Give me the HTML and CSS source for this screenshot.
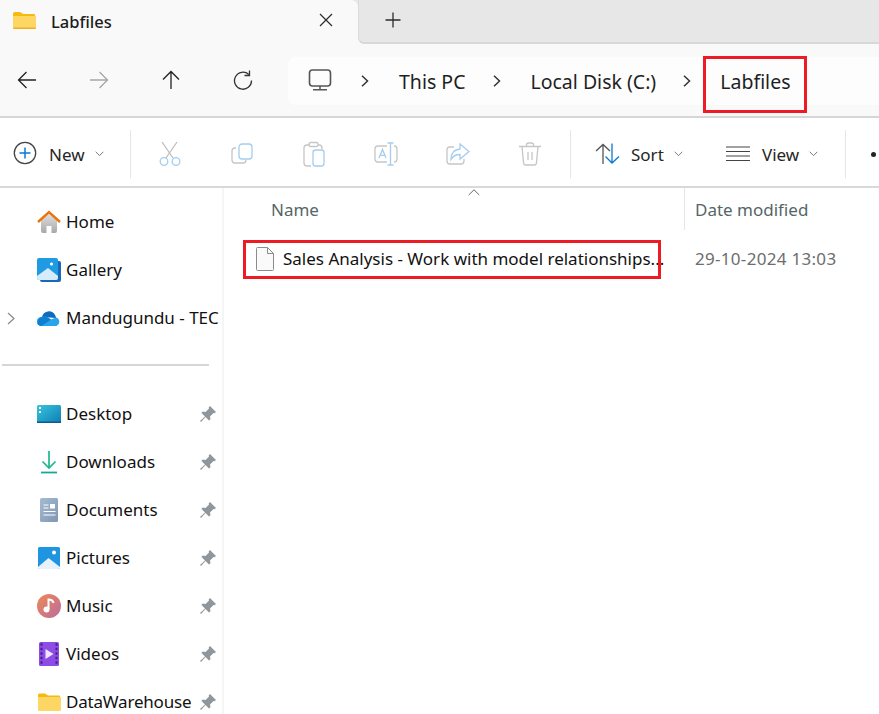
FILE: index.html
```html
<!DOCTYPE html>
<html lang="en">
<head>
<meta charset="utf-8">
<title>Labfiles</title>
<link rel="stylesheet" href="styles.css">
</head>
<body>
<div class="app">
  <header class="tabstrip">
    <div class="tab">
      <svg class="tab-folder" width="24" height="18" viewBox="0 0 24 18"><path d="M1 3a2 2 0 0 1 2-2h5l3 2h11a1 1 0 0 1 1 1v1H1z" fill="#f5b90f"/><path d="M1 5h23v11a1.500 1.500 0 0 1-1.500 1.500h-20A1.500 1.500 0 0 1 1 16z" fill="#fdd663"/><path d="M1 16.500h23v.5a1 1 0 0 1-1 1H2a1 1 0 0 1-1-1z" fill="#eeb01f"/></svg>
      <span class="tab-title">Labfiles</span>
      <svg class="tab-close" width="14" height="14" viewBox="0 0 14 14"><path d="M1 1l12 12M13 1L1 13" stroke="#2b2b2b" stroke-width="1.200" fill="none"/></svg>
    </div>
    <div class="tab-rest">
      <svg class="tab-plus" width="16" height="16" viewBox="0 0 16 16"><path d="M8 .5v15M.5 8h15" stroke="#2b2b2b" stroke-width="1.300" fill="none"/></svg>
    </div>
  </header>

  <nav class="navbar">
    <div class="nav-btn"><svg width="20" height="20" viewBox="0 0 20 20"><path d="M19 10H1.500M9.500 2l-8 8 8 8" stroke="#222" stroke-width="1.300" fill="none"/></svg></div>
    <div class="nav-btn"><svg width="20" height="20" viewBox="0 0 20 20"><path d="M1 10h17.500M10.500 2l8 8-8 8" stroke="#a6a6a6" stroke-width="1.300" fill="none"/></svg></div>
    <div class="nav-btn"><svg width="20" height="20" viewBox="0 0 20 20"><path d="M10 19V1.500M2 9.500l8-8 8 8" stroke="#222" stroke-width="1.300" fill="none"/></svg></div>
    <div class="nav-btn"><svg width="20" height="20" viewBox="0 0 20 20"><path d="M15.800 4.500A8.500 8.500 0 1 0 18.500 10.500" stroke="#333" stroke-width="1.300" fill="none"/><path d="M16.500 .5v5h-5" stroke="#333" stroke-width="1.300" fill="none"/></svg></div>
    <div class="address">
      <svg class="pc-icon" width="24" height="22" viewBox="0 0 24 22"><rect x="1.500" y="1" width="21" height="16" rx="3" fill="none" stroke="#555" stroke-width="1.600"/><path d="M12 17v4M5 20.800h14" stroke="#555" stroke-width="1.500" fill="none"/></svg>
      <svg class="crumb-chev chev-pc" width="8" height="12" viewBox="0 0 8 12"><path d="M1 .8L6.500 6 1 11.200" stroke="#333" stroke-width="1.500" fill="none"/></svg>
      <span class="crumb crumb-pc">This PC</span>
      <svg class="crumb-chev chev-disk" width="8" height="12" viewBox="0 0 8 12"><path d="M1 .8L6.500 6 1 11.200" stroke="#333" stroke-width="1.500" fill="none"/></svg>
      <span class="crumb crumb-disk">Local Disk (C:)</span>
      <svg class="crumb-chev chev-lab" width="8" height="12" viewBox="0 0 8 12"><path d="M1 .8L6.500 6 1 11.200" stroke="#333" stroke-width="1.500" fill="none"/></svg>
      <span class="crumb crumb-current">Labfiles<i class="mark mark-crumb"></i></span>
    </div>
  </nav>

  <section class="toolbar">
    <div class="tool tool-new">
      <svg width="24" height="24" viewBox="0 0 24 24"><circle cx="12" cy="12" r="10.700" fill="none" stroke="#444" stroke-width="1.300"/><path d="M12 6.500v11M6.500 12h11" stroke="#0a78d4" stroke-width="1.500"/></svg>
      <span class="tool-label">New</span>
      <svg class="chev" width="9" height="6" viewBox="0 0 9 6"><path d="M.7 .8L4.500 4.600 8.300 .8" stroke="#777" stroke-width="1" fill="none"/></svg>
    </div>
    <div class="tool-sep"></div>
    <div class="tool-icon"><svg width="22" height="26" viewBox="0 0 22 26"><path d="M3 1l11 16M18 1L7 17" stroke="#bdbdbd" stroke-width="1.300" fill="none"/><circle cx="5" cy="20.500" r="3.800" fill="none" stroke="#a4cdf0" stroke-width="1.300"/><circle cx="17" cy="20.500" r="3.800" fill="none" stroke="#a4cdf0" stroke-width="1.300"/></svg></div>
    <div class="tool-icon"><svg width="22" height="22" viewBox="0 0 22 22"><path d="M5 5H4a3 3 0 0 0-3 3v9a3 3 0 0 0 3 3h8a3 3 0 0 0 3-3" fill="none" stroke="#c6c6c6" stroke-width="1.300"/><rect x="8" y="1" width="13" height="15" rx="3" fill="none" stroke="#a4cdf0" stroke-width="1.300"/></svg></div>
    <div class="tool-icon"><svg width="22" height="26" viewBox="0 0 22 26"><path d="M7 4H4a3 3 0 0 0-3 3v15a3 3 0 0 0 3 3h4M15 4h1a3 3 0 0 1 3 3v1" fill="none" stroke="#c6c6c6" stroke-width="1.300"/><rect x="6" y="1.500" width="9" height="4" rx="1.500" fill="none" stroke="#c6c6c6" stroke-width="1.300"/><rect x="10" y="9" width="11" height="16" rx="2.500" fill="none" stroke="#a4cdf0" stroke-width="1.300"/></svg></div>
    <div class="tool-icon"><svg width="24" height="24" viewBox="0 0 24 24"><path d="M13 4H4a3 3 0 0 0-3 3v10a3 3 0 0 0 3 3h9M20 4a3 3 0 0 1 3 3v10a3 3 0 0 1-3 3" fill="none" stroke="#c6c6c6" stroke-width="1.300"/><path d="M16.500 1v22M13.500 1h6M13.500 23h6" stroke="#a4cdf0" stroke-width="1.300" fill="none"/><path d="M5 16l3.500-8.500L12 16M6.200 13.300h4.600" stroke="#a4cdf0" stroke-width="1.300" fill="none"/></svg></div>
    <div class="tool-icon"><svg width="24" height="22" viewBox="0 0 24 22"><path d="M8 4H4a3 3 0 0 0-3 3v11a3 3 0 0 0 3 3h11a3 3 0 0 0 3-3v-2" fill="none" stroke="#c6c6c6" stroke-width="1.300"/><path d="M14 1l9 7.500-9 7.500v-4.500c-4 0-7 1.500-9 5 0-6 3-10 9-10.500z" fill="none" stroke="#a4cdf0" stroke-width="1.300"/></svg></div>
    <div class="tool-icon"><svg width="22" height="24" viewBox="0 0 22 24"><path d="M0 4.500h22M7.500 4.500V3a2 2 0 0 1 2-2h3a2 2 0 0 1 2 2v1.500M3 4.500l1.500 16a2.500 2.500 0 0 0 2.500 2.500h8a2.500 2.500 0 0 0 2.500-2.500l1.500-16M9 10v8M13 10v8" fill="none" stroke="#c6c6c6" stroke-width="1.300"/></svg></div>
    <div class="tool-sep tool-sep-b"></div>
    <div class="tool tool-sort">
      <svg class="tool-glyph" width="26" height="22" viewBox="0 0 26 22"><path d="M8 21V1.500M1 8l7-6.500L15 8" stroke="#555" stroke-width="1.300" fill="none"/><path d="M17 .5V20M10.500 13.500L17 20l7-6.500" stroke="#0a78d4" stroke-width="1.300" fill="none"/></svg>
      <span class="tool-label">Sort</span>
      <svg class="chev" width="9" height="6" viewBox="0 0 9 6"><path d="M.7 .8L4.500 4.600 8.300 .8" stroke="#777" stroke-width="1" fill="none"/></svg>
    </div>
    <div class="tool tool-view">
      <svg class="tool-glyph" width="24" height="16" viewBox="0 0 24 16"><path d="M0 1h24M0 5.500h24M0 10h24M0 14.500h24" stroke="#444" stroke-width="1.200"/></svg>
      <span class="tool-label">View</span>
      <svg class="chev" width="9" height="6" viewBox="0 0 9 6"><path d="M.7 .8L4.500 4.600 8.300 .8" stroke="#777" stroke-width="1" fill="none"/></svg>
    </div>
    <div class="tool-sep"></div>
    <div class="more-dot"></div>
  </section>

  <div class="body">
    <aside class="sidebar">
      <div class="side-row">
        <svg class="side-icon" width="24" height="24" viewBox="0 0 24 24"><defs><linearGradient id="hg" x1="0" y1="0" x2="0" y2="1"><stop offset="0" stop-color="#e2e2e2"/><stop offset="1" stop-color="#a8a8a8"/></linearGradient></defs><path d="M4 10l8-7 8 7v11a2 2 0 0 1-2 2h-3.500v-7h-5v7H6a2 2 0 0 1-2-2z" fill="url(#hg)"/><path d="M1 12L12 2l11 10" fill="none" stroke="#e8760b" stroke-width="2.400"/></svg>
        <span class="side-label">Home</span>
      </div>
      <div class="side-row">
        <svg class="side-icon" width="24" height="24" viewBox="0 0 24 24"><rect x="3" y="3" width="21" height="21" rx="2" fill="#1a69b8"/><path d="M0 2a2 2 0 0 1 2-2h17a2 2 0 0 1 2 2v18a2 2 0 0 1-2 2H2a2 2 0 0 1-2-2z" fill="#1f9be4"/><path d="M0 18l11-8 10 8v2a2 2 0 0 1-2 2H2a2 2 0 0 1-2-2z" fill="#d6ecfb"/><circle cx="14.500" cy="6" r="1.600" fill="#fff"/></svg>
        <span class="side-label">Gallery</span>
      </div>
      <div class="side-row">
        <svg class="side-chevron" width="8" height="13" viewBox="0 0 8 13"><path d="M1 1l6 5.500L1 12" stroke="#8c8c8c" stroke-width="1.300" fill="none"/></svg>
        <svg class="side-icon" width="24" height="16" viewBox="0 0 24 16"><path d="M5 7a7 7 0 0 1 13-2 5 5 0 0 1 1 3z" fill="#0f6cbd"/><path d="M4.500 16A4.500 4.500 0 0 1 4 7l5-.5 5 3 5-2a4.500 4.500 0 0 1 .5 8.500z" fill="#28a4ea"/><path d="M1 14.500C0 12 1.500 7.500 5 7l4-.5 5 3L4.500 16A4 4 0 0 1 1 14.500z" fill="#0f7fd1"/></svg>
        <span class="side-label">Mandugundu - TEC</span>
      </div>
      <div class="side-divider"></div>
      <div class="side-row">
        <svg class="side-icon" width="24" height="18" viewBox="0 0 24 18"><defs><linearGradient id="dg" x1="0" y1="0" x2="1" y2="1"><stop offset="0" stop-color="#36c6de"/><stop offset="1" stop-color="#0f7cb4"/></linearGradient></defs><rect width="24" height="18" rx="1.500" fill="url(#dg)"/><rect y="16.500" width="24" height="1.500" fill="#0b5c8c"/><rect x="2" y="2" width="2" height="2" fill="#fff"/><rect x="2" y="6" width="2" height="2" fill="#fff"/></svg>
        <span class="side-label">Desktop</span>
        <svg class="pin" width="16" height="16" viewBox="0 0 16 16"><path d="M10 0l6 6-1.500 1.200-1-.3L10 10.500l.5 2.700L9 14.500 5.500 11 1 16l-1-1 5-4.500L1.500 7l1.300-1.500 2.700.5L9 2.500l-.3-1z" fill="#8f979e"/></svg>
      </div>
      <div class="side-row">
        <svg class="side-icon" width="24" height="24" viewBox="0 0 24 24"><path d="M12 1v17M5.500 11.500L12 18l6.500-6.500" fill="none" stroke="#1fb88f" stroke-width="1.700"/><path d="M4 22.500h16" stroke="#18a6a0" stroke-width="1.800"/></svg>
        <span class="side-label">Downloads</span>
        <svg class="pin" width="16" height="16" viewBox="0 0 16 16"><path d="M10 0l6 6-1.500 1.200-1-.3L10 10.500l.5 2.700L9 14.500 5.500 11 1 16l-1-1 5-4.500L1.500 7l1.300-1.500 2.700.5L9 2.500l-.3-1z" fill="#8f979e"/></svg>
      </div>
      <div class="side-row">
        <svg class="side-icon" width="24" height="24" viewBox="0 0 24 24"><defs><linearGradient id="ng" x1="0" y1="0" x2="1" y2="1"><stop offset="0" stop-color="#a6bad2"/><stop offset="1" stop-color="#7f97b4"/></linearGradient></defs><rect x="3" width="18" height="24" rx="1.500" fill="url(#ng)"/><path d="M6.500 7h5M6.500 10h5M6.500 13.500h12M6.500 17h12" stroke="#fff" stroke-width="1.100"/><rect x="13" y="6" width="5" height="4.500" fill="#fff"/></svg>
        <span class="side-label">Documents</span>
        <svg class="pin" width="16" height="16" viewBox="0 0 16 16"><path d="M10 0l6 6-1.500 1.200-1-.3L10 10.500l.5 2.700L9 14.500 5.500 11 1 16l-1-1 5-4.500L1.500 7l1.300-1.500 2.700.5L9 2.500l-.3-1z" fill="#8f979e"/></svg>
      </div>
      <div class="side-row">
        <svg class="side-icon" width="24" height="24" viewBox="0 0 24 24"><path d="M1 2.500A1.500 1.500 0 0 1 2.500 1h19A1.500 1.500 0 0 1 23 2.500v19a1.500 1.500 0 0 1-1.500 1.500h-19A1.500 1.500 0 0 1 1 21.500z" fill="#1f95e2"/><path d="M1 21l10.500-9L23 21v.5a1.500 1.500 0 0 1-1.500 1.500h-19A1.500 1.500 0 0 1 1 21.500z" fill="#e6f3fc"/><circle cx="17" cy="6.500" r="2" fill="#fff"/></svg>
        <span class="side-label">Pictures</span>
        <svg class="pin" width="16" height="16" viewBox="0 0 16 16"><path d="M10 0l6 6-1.500 1.200-1-.3L10 10.500l.5 2.700L9 14.500 5.500 11 1 16l-1-1 5-4.500L1.500 7l1.300-1.500 2.700.5L9 2.500l-.3-1z" fill="#8f979e"/></svg>
      </div>
      <div class="side-row">
        <svg class="side-icon" width="24" height="24" viewBox="0 0 24 24"><defs><linearGradient id="mg" x1="0" y1="0" x2="1" y2="1"><stop offset="0" stop-color="#ef8a52"/><stop offset="1" stop-color="#bb6aa0"/></linearGradient></defs><circle cx="12" cy="12" r="12" fill="url(#mg)"/><path d="M11.500 15V5.500c2.500 0 4.500 1 5 3.500" fill="none" stroke="#fff" stroke-width="2"/><circle cx="9.500" cy="15.500" r="3" fill="#fff"/></svg>
        <span class="side-label">Music</span>
        <svg class="pin" width="16" height="16" viewBox="0 0 16 16"><path d="M10 0l6 6-1.500 1.200-1-.3L10 10.500l.5 2.700L9 14.500 5.500 11 1 16l-1-1 5-4.500L1.500 7l1.300-1.500 2.700.5L9 2.500l-.3-1z" fill="#8f979e"/></svg>
      </div>
      <div class="side-row">
        <svg class="side-icon" width="24" height="24" viewBox="0 0 24 24"><rect x="2" width="20" height="24" rx="1.500" fill="#8e4be6"/><path d="M3.500 2.500h2M3.500 7h2M3.500 11.500h2M3.500 16h2M3.500 20.500h2M18.500 2.500h2M18.500 7h2M18.500 11.500h2M18.500 16h2M18.500 20.500h2" stroke="#43208a" stroke-width="2.500"/><path d="M8.500 7l8 5-8 5z" fill="#eee6fb"/></svg>
        <span class="side-label">Videos</span>
        <svg class="pin" width="16" height="16" viewBox="0 0 16 16"><path d="M10 0l6 6-1.500 1.200-1-.3L10 10.500l.5 2.700L9 14.500 5.500 11 1 16l-1-1 5-4.500L1.500 7l1.300-1.500 2.700.5L9 2.500l-.3-1z" fill="#8f979e"/></svg>
      </div>
      <div class="side-row">
        <svg class="side-icon" width="24" height="18" viewBox="0 0 24 18"><path d="M1 2a1.500 1.500 0 0 1 1.500-1.500H8l3 2h11a1 1 0 0 1 1 1V5H1z" fill="#f5b90f"/><path d="M1 4h23v12.500a1.500 1.500 0 0 1-1.500 1.500h-20A1.500 1.500 0 0 1 1 16.500z" fill="#fdd663"/></svg>
        <span class="side-label side-label-tight">DataWarehouse</span>
        <svg class="pin" width="16" height="16" viewBox="0 0 16 16"><path d="M10 0l6 6-1.500 1.200-1-.3L10 10.500l.5 2.700L9 14.500 5.500 11 1 16l-1-1 5-4.500L1.500 7l1.300-1.500 2.700.5L9 2.500l-.3-1z" fill="#8f979e"/></svg>
      </div>
    </aside>

    <main class="files">
      <div class="col-head">
        <svg class="sort-caret" width="12" height="7" viewBox="0 0 12 7"><path d="M.7 6L6 .8 11.300 6" stroke="#666" stroke-width="1" fill="none"/></svg>
        <div class="col col-name">Name</div>
        <div class="col col-date">Date modified</div>
      </div>
      <div class="file-row">
        <i class="mark mark-file"></i>
        <svg class="file-icon" width="20" height="24" viewBox="0 0 20 24"><path d="M2.500.5h10l6 6v16a1 1 0 0 1-1 1h-15a1 1 0 0 1-1-1v-21a1 1 0 0 1 1-1z" fill="#fafafa" stroke="#8c8c8c"/><path d="M12.500.5v6h6" fill="none" stroke="#8c8c8c"/></svg>
        <span class="file-name">Sales Analysis - Work with model relationships...</span>
        <span class="file-date">29-10-2024 13:03</span>
      </div>
    </main>
  </div>
</div>
</body>
</html>
```

FILE: styles.css
```css
* { box-sizing: border-box; }
html, body { margin: 0; padding: 0; background: #fff; }
body { font-family: "Noto Sans", "Open Sans", sans-serif; color: #1c1c1c; }
.app { width: 879px; height: 714px; overflow: hidden; display: flex; flex-direction: column; }

/* tabs */
.tabstrip { height: 44px; display: flex; flex: none; background: linear-gradient(#e7e7e7 50%, #f9f9f9 50%); }
.tab { width: 358px; display: flex; align-items: center; padding: 0 0 4px 12px; background: #f9f9f9; border-top-right-radius: 7px; }
.tab-folder { flex: none; }
.tab-title { margin-left: 15px; padding-top: 2px; font-size: 16.5px; font-weight: 500; width: 268px; }
.tab-close { flex: none; }
.tab-rest { flex: 1; background: #e7e7e7; border-bottom: 2px solid #d8d8d8; border-left: 1px solid #dcdcdc; border-bottom-left-radius: 6px; padding: 0 0 2px 26px; display: flex; align-items: center; }

/* nav row */
.navbar { height: 74px; flex: none; display: flex; align-items: center; background: #f9f9f9; border-bottom: 2px solid #d6d6d6; }
.nav-btn { width: 72px; flex: none; display: flex; justify-content: center; align-items: center; }
.nav-btn:first-child { margin-left: -9px; }
.address { margin: 2px 0 0 9px; flex: 1; height: 48px; background: #fdfdfd; border-radius: 8px 0 0 8px; display: flex; align-items: center; padding-left: 20px; }
.pc-icon { flex: none; margin-bottom: 2px; }
.crumb-chev { flex: none; }
.chev-pc { margin-left: 29px; }
.chev-disk { margin-left: 28px; }
.chev-lab { margin-left: 27px; }
.crumb { font-size: 19.5px; padding-top: 1px; white-space: nowrap; color: #1f1f1f; margin-left: 29px; }
.crumb-pc { margin-left: 30px; }
.crumb-current { position: relative; }
.mark { display: block; position: absolute; border: 3px solid #ed1c24; }
.mark-crumb { left: -17px; top: -11px; width: 104px; height: 57px; }

/* toolbar */
.toolbar { height: 70px; flex: none; background: #fff; border-bottom: 2px solid #d9d9d9; display: flex; align-items: center; padding-top: 2px; }
.tool { display: flex; align-items: center; flex: none; }
.tool-new { padding-left: 13px; width: 130px; }
.tool-label { font-size: 17px; margin-left: 12px; padding-top: 2px; color: #262626; }
.tool-sort .tool-label { margin-left: 10px; }
.tool-glyph { margin-top: 2px; }
.chev { flex: none; margin: 2px 0 0 10px; }
.tool-sep { width: 1px; height: 48px; margin-top: 2px; background: #e6e6e6; flex: none; }
.tool-icon { width: 72px; margin-top: 2px; display: flex; justify-content: center; align-items: center; flex: none; }
.tool-new + .tool-sep + .tool-icon { margin-left: 3px; }
.tool-sep-b { margin-left: 4px; }
.tool-sort { margin-left: 24px; width: 131px; }
.tool-view { width: 119px; }
.more-dot { width: 5px; height: 5px; border-radius: 50%; background: #222; margin: 2px 0 0 25px; flex: none; }

/* body */
.body { flex: 1; display: flex; min-height: 0; }
.sidebar { width: 224px; flex: none; border-right: 2px solid #f5f5f5; padding-top: 10px; }
.side-row { height: 48px; display: flex; align-items: center; position: relative; padding-left: 37px; }
.side-icon { flex: none; }
.side-chevron { position: absolute; left: 7px; top: 18px; }
.side-label { margin-left: 5px; padding-bottom: 2px; font-size: 17px; color: #111; white-space: nowrap; }
.side-label-tight { letter-spacing: -.2px; }
.pin { position: absolute; left: 200px; top: 16px; }
.side-divider { height: 2px; width: 207px; margin: 22px 0 24px 2px; background: #d6d6d6; }

/* file list */
.files { flex: 1; min-width: 0; }
.col-head { height: 42px; display: flex; position: relative; align-items: center; }
.col { font-size: 17px; color: #566; white-space: nowrap; }
.col-name { width: 460px; padding-left: 47px; }
.col-date { border-left: 1px solid #e6e6e6; height: 42px; padding-left: 10px; display: flex; align-items: center; }
.sort-caret { position: absolute; left: 244px; top: 1px; }
.file-row { height: 48px; margin-top: 5px; display: flex; align-items: center; position: relative; padding-left: 31px; }
.file-icon { flex: none; }
.file-name { font-size: 17px; margin-left: 8px; padding-bottom: 2px; width: 412px; white-space: nowrap; color: #111; }
.file-date { font-size: 17px; padding-bottom: 2px; letter-spacing: .3px; color: #6d6d6d; white-space: nowrap; }
.mark-file { left: 19px; top: 5px; width: 418px; height: 39px; }
```
